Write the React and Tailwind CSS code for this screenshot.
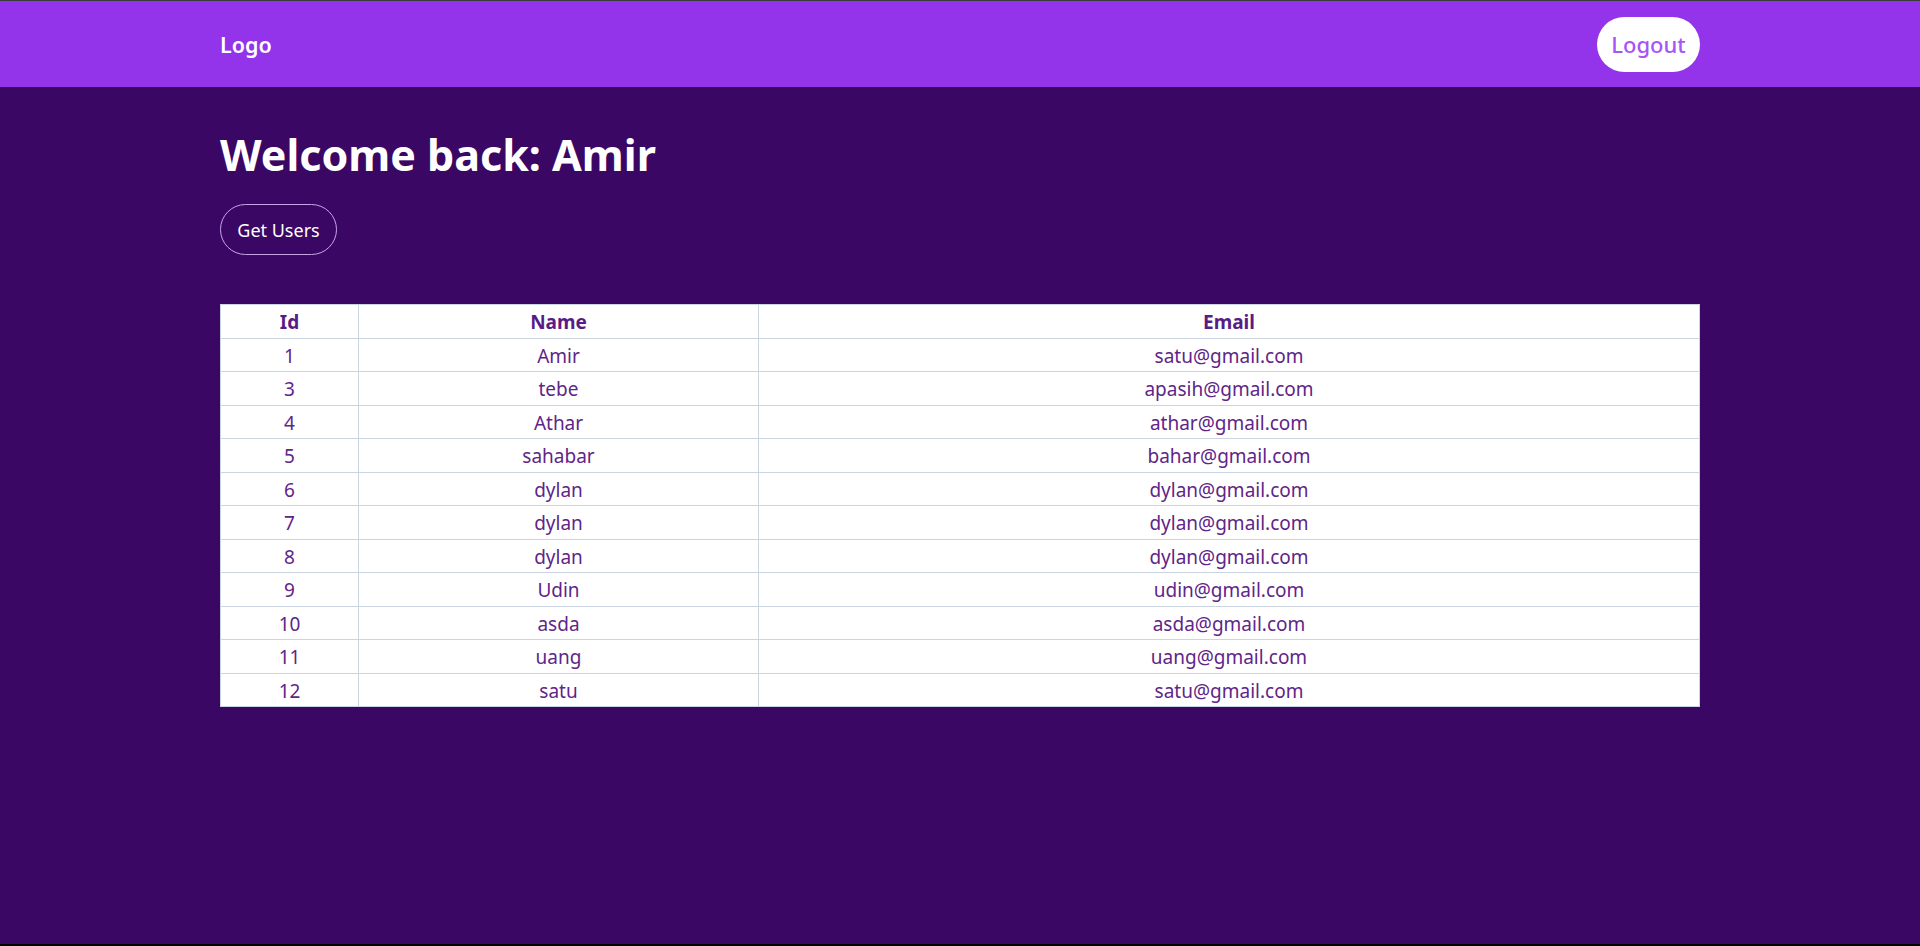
import React from "react";

const users = [
  [1, "Amir", "satu@gmail.com"],
  [3, "tebe", "apasih@gmail.com"],
  [4, "Athar", "athar@gmail.com"],
  [5, "sahabar", "bahar@gmail.com"],
  [6, "dylan", "dylan@gmail.com"],
  [7, "dylan", "dylan@gmail.com"],
  [8, "dylan", "dylan@gmail.com"],
  [9, "Udin", "udin@gmail.com"],
  [10, "asda", "asda@gmail.com"],
  [11, "uang", "uang@gmail.com"],
  [12, "satu", "satu@gmail.com"],
];

export default function App() {
  return (
    <div
      className="h-[946px] flex flex-col bg-[#3b0764] border-t border-t-[#3a3a3a] border-b-2 border-b-black"
      style={{ fontFamily: '"Noto Sans", sans-serif' }}
    >
      <header className="h-[86px] shrink-0 bg-[#9333ea] px-[220px] flex items-center justify-between">
        <div className="text-white text-[21.5px] font-semibold leading-none pt-[1px]">Logo</div>
        <button className="h-[55px] w-[103px] rounded-full bg-white text-[#a855f7] text-[22px] font-medium leading-none flex items-center justify-center">
          Logout
        </button>
      </header>
      <main className="px-[220px] pt-[41px]">
        <h1 className="text-white text-[43px] font-bold leading-[54px]">Welcome back: Amir</h1>
        <button className="mt-[22px] h-[51px] w-[117px] rounded-full border border-[#c9a5e8] text-white text-[18px] leading-none flex items-center justify-center">
          Get Users
        </button>
        <table className="mt-[49px] w-full border-collapse bg-white text-[19px] text-center border border-[#cbd5e1]">
          <thead>
            <tr>
              <th className="w-[138px] border border-[#cbd5e1] pt-[3px] pb-[1px] leading-[28.5px] font-bold text-[#581c87]">Id</th>
              <th className="w-[400px] border border-[#cbd5e1] pt-[3px] pb-[1px] leading-[28.5px] font-bold text-[#581c87]">Name</th>
              <th className="border border-[#cbd5e1] pt-[3px] pb-[1px] leading-[28.5px] font-bold text-[#581c87]">Email</th>
            </tr>
          </thead>
          <tbody>
            {users.map(([id, name, email]) => (
              <tr key={id}>
                <td className="border border-[#cbd5e1] pt-[3px] pb-[1px] leading-[28.5px] text-[#5f2588]">{id}</td>
                <td className="border border-[#cbd5e1] pt-[3px] pb-[1px] leading-[28.5px] text-[#5f2588]">{name}</td>
                <td className="border border-[#cbd5e1] pt-[3px] pb-[1px] leading-[28.5px] text-[#5f2588]">{email}</td>
              </tr>
            ))}
          </tbody>
        </table>
      </main>
    </div>
  );
}
